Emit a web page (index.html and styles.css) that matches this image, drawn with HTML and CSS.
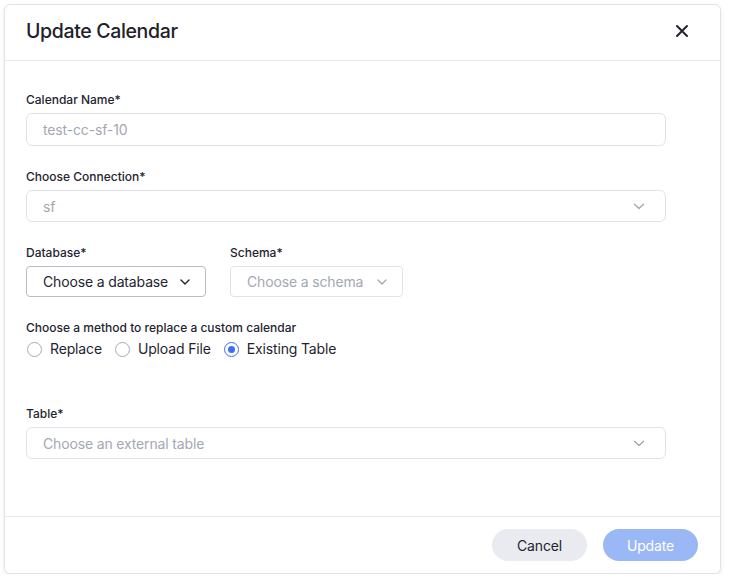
FILE: index.html
```html
<!DOCTYPE html>
<html>
<head>
<meta charset="utf-8">
<link rel="stylesheet" href="styles.css">
</head>
<body>
<div class="modal">
  <div class="modal-header">
    <h1 class="title">Update Calendar</h1>
    <button class="close" aria-label="Close">
      <svg width="14" height="14" viewBox="0 0 14 14"><path d="M2 2L12 12M12 2L2 12" stroke="#1f2430" stroke-width="2" stroke-linecap="round"/></svg>
    </button>
  </div>
  <div class="modal-body">
    <div class="form">
      <div class="field">
        <label class="label">Calendar Name*</label>
        <div class="input"><span class="muted">test-cc-sf-10</span></div>
      </div>
      <div class="field">
        <label class="label">Choose Connection*</label>
        <div class="input select"><span class="muted">sf</span>
          <svg class="chev" width="12" height="7" viewBox="0 0 12 7"><path d="M1.5 1.2L6 5.5L10.5 1.2" fill="none" stroke="#a2a6b0" stroke-width="1.3" stroke-linecap="round" stroke-linejoin="round"/></svg>
        </div>
      </div>
      <div class="row">
        <div class="col">
          <label class="label">Database*</label>
          <div class="dropdown active"><span>Choose a database</span>
            <svg width="10" height="6" viewBox="0 0 10 6"><path d="M1 1L5 5L9 1" fill="none" stroke="#1f2430" stroke-width="1.4" stroke-linecap="round" stroke-linejoin="round"/></svg>
          </div>
        </div>
        <div class="col">
          <label class="label">Schema*</label>
          <div class="dropdown off"><span>Choose a schema</span>
            <svg width="10" height="6" viewBox="0 0 10 6"><path d="M1 1L5 5L9 1" fill="none" stroke="#a2a6b0" stroke-width="1.3" stroke-linecap="round" stroke-linejoin="round"/></svg>
          </div>
        </div>
      </div>
      <div class="field method">
        <label class="label">Choose a method to replace a custom calendar</label>
        <div class="radios">
          <span class="radio"><span class="circle"></span>Replace</span>
          <span class="radio"><span class="circle"></span>Upload File</span>
          <span class="radio"><span class="circle checked"></span>Existing Table</span>
        </div>
      </div>
      <div class="field table-field">
        <label class="label">Table*</label>
        <div class="input select"><span class="muted">Choose an external table</span>
          <svg class="chev" width="12" height="7" viewBox="0 0 12 7"><path d="M1.5 1.2L6 5.5L10.5 1.2" fill="none" stroke="#a2a6b0" stroke-width="1.3" stroke-linecap="round" stroke-linejoin="round"/></svg>
        </div>
      </div>
    </div>
  </div>
  <div class="modal-footer">
    <button class="btn cancel">Cancel</button>
    <button class="btn primary">Update</button>
  </div>
</div>
</body>
</html>
```

FILE: styles.css
```css
* { box-sizing: border-box; }
html, body { margin: 0; padding: 0; background: #ffffff; }
body {
  font-family: Inter, "Noto Sans", "Liberation Sans", sans-serif;
  color: #1f2430;
  padding: 4px 13px 0 4px;
}
.modal {
  width: 717px;
  height: 570px;
  border: 1px solid #e1e3e8;
  border-radius: 6px;
  background: #fff;
  box-shadow: 0 2px 4px rgba(20, 25, 40, 0.08);
  display: flex;
  flex-direction: column;
}
.modal-header {
  height: 56px;
  border-bottom: 1px solid #e7e9ee;
  display: flex;
  align-items: center;
  justify-content: space-between;
  padding: 0 31px 3px 21px;
  flex-shrink: 0;
}
.title {
  margin: 0;
  font-size: 19.5px;
  font-weight: 500;
  letter-spacing: -0.35px;
  color: #1d2129;
}
.close {
  border: 0;
  background: none;
  padding: 0;
  width: 14px;
  height: 14px;
  display: flex;
}
.modal-body {
  flex: 1;
  padding: 31px 21px 0 21px;
}
.form { width: 640px; display: flex; flex-direction: column; }
.field, .col { display: flex; flex-direction: column; }
.form > .field + .field,
.form > .row,
.form > .row + .field { margin-top: 23px; }
.label {
  font-size: 12px;
  font-weight: 500;
  line-height: 16px;
  color: #1f2430;
  margin-bottom: 5px;
  white-space: nowrap;
}
.input {
  height: 33px;
  border: 1px solid #e1e3e8;
  border-radius: 6px;
  display: flex;
  align-items: center;
  justify-content: space-between;
  padding: 0 20px 0 16px;
  font-size: 14px;
  letter-spacing: -0.15px;
}
.input.select { height: 32px; }
.muted { color: #a4a8b2; }
.row { display: flex; gap: 24px; }
.dropdown {
  height: 31px;
  border-radius: 4px;
  display: flex;
  align-items: center;
  justify-content: space-between;
  padding: 0 15px 0 16px;
  font-size: 14px;
  letter-spacing: -0.15px;
  white-space: nowrap;
}
.dropdown.active {
  border: 1px solid #b8bcc7;
  color: #1f2430;
  width: 180px;
}
.dropdown.off {
  border: 1px solid #e1e3e8;
  color: #a4a8b2;
  width: 173px;
}
.form > .method .label { margin-bottom: 4px; }
.radios { display: flex; gap: 13px; padding-left: 1px; }
.radio {
  display: flex;
  align-items: center;
  gap: 8px;
  font-size: 14px;
  letter-spacing: -0.15px;
  line-height: 18px;
  color: #1f2430;
  white-space: nowrap;
}
.circle {
  width: 15px;
  height: 15px;
  border: 1px solid #a5aab5;
  border-radius: 50%;
  display: flex;
  align-items: center;
  justify-content: center;
  flex-shrink: 0;
}
.circle.checked { border-color: #3e6ff0; }
.circle.checked::after {
  content: "";
  width: 7px;
  height: 7px;
  border-radius: 50%;
  background: #3e6ff0;
}
.form > .field.table-field { margin-top: 48px; }
.modal-footer {
  height: 57px;
  border-top: 1px solid #e7e9ee;
  display: flex;
  justify-content: flex-end;
  align-items: flex-start;
  padding: 12px 22px 0 0;
  gap: 16px;
  flex-shrink: 0;
}
.btn {
  height: 32px;
  width: 95px;
  border: 0;
  border-radius: 16px;
  font-family: inherit;
  font-size: 14px;
  letter-spacing: -0.15px;
  font-weight: 400;
}
.cancel { background: #e9ebf0; color: #1f2430; }
.primary { background: #9bb8f6; color: #ffffff; }
```
